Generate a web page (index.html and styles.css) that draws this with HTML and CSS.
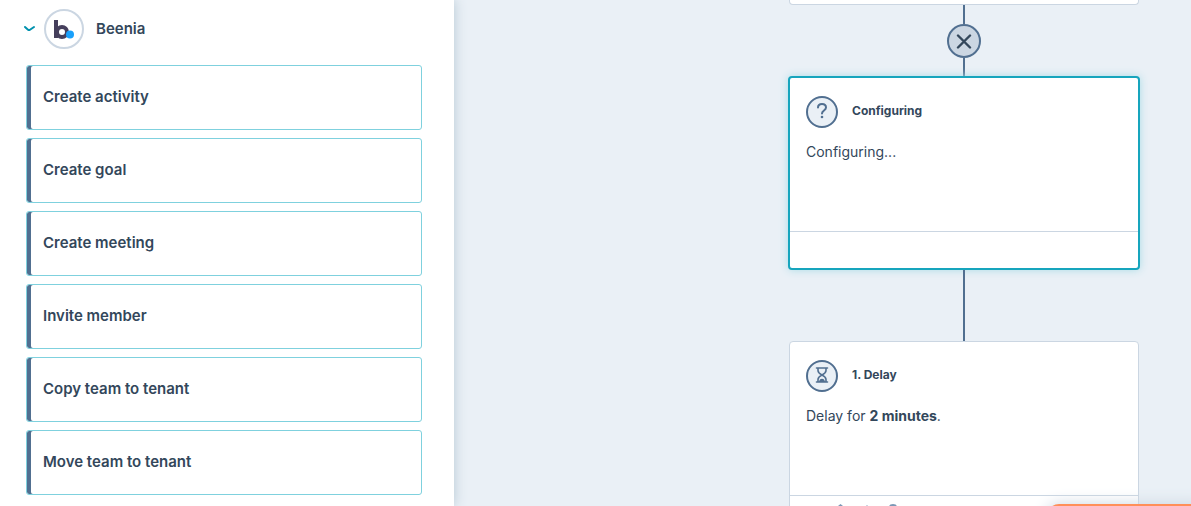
FILE: index.html
```html
<!DOCTYPE html>
<html lang="en">
<head>
  <meta charset="utf-8" />
  <meta name="viewport" content="width=device-width, initial-scale=1.0" />
  <title>Workflow editor</title>
  <link rel="stylesheet" href="styles.css">
</head>
<body>

  <aside class="sidebar">
    <button class="group-header" type="button" aria-expanded="true">
      <svg class="chevron" viewBox="0 0 14 10" aria-hidden="true">
        <path d="M3 3L6 5.700Q7 6.400 8 5.700L12 3" />
      </svg>
      <span class="app-logo">
        <svg viewBox="0 0 22 22" aria-hidden="true">
          <path class="logo-b" d="M3 2V20" />
          <circle class="logo-b" cx="9" cy="14" r="5" />
          <circle class="logo-dot" cx="17" cy="16.500" r="4" />
        </svg>
      </span>
      <span class="group-name">Beenia</span>
    </button>

    <div class="action-list">
      <button class="action" type="button">Create activity</button>
      <button class="action" type="button">Create goal</button>
      <button class="action" type="button">Create meeting</button>
      <button class="action" type="button">Invite member</button>
      <button class="action" type="button">Copy team to tenant</button>
      <button class="action" type="button">Move team to tenant</button>
    </div>
  </aside>

  <main class="canvas">
    <div class="flow">
      <div class="card card-end"></div>
      <div class="line line-short"></div>
      <button class="cancel" type="button" aria-label="Cancel">
        <svg viewBox="0 0 16 16" aria-hidden="true">
          <path d="M2 2.500L14 14.500M14 2.500L2 14.500" />
        </svg>
      </button>
      <div class="line line-short"></div>

      <section class="card selected">
        <div class="card-body">
          <div class="card-header">
            <span class="step-icon">
              <svg viewBox="0 0 20 20" aria-hidden="true">
                <path d="M6 5.500C6 0.800 14 0.800 14 5.500C14 8.500 10 8.500 10 11.500" />
                <circle class="dot" cx="10" cy="15" r="1.300" />
              </svg>
            </span>
            <h2>Configuring</h2>
          </div>
          <p>Configuring...</p>
        </div>
        <div class="card-footer"></div>
      </section>

      <div class="line line-long"></div>

      <section class="card">
        <div class="card-body">
          <div class="card-header">
            <span class="step-icon">
              <svg class="hourglass" viewBox="0 0 20 20" aria-hidden="true">
                <path d="M4.500 2H15.500M4.500 16H15.500M6 2V4.500C6 6.500 8 8 10 9C12 8 14 6.500 14 4.500V2M6 16V13.500C6 11.500 8 10 10 9C12 10 14 11.500 14 13.500V16" />
                <path class="dot" d="M7 16C7 11.500 13 11.500 13 16Z" />
              </svg>
            </span>
            <h2>1. Delay</h2>
          </div>
          <p>Delay for <b>2 minutes</b>.</p>
        </div>
        <div class="card-footer card-tools">
          <button type="button" aria-label="Step options">
            <svg viewBox="0 0 60 12" aria-hidden="true">
              <path d="M1 2L3.500 0L6 2V8H1Z" />
              <path class="faint" d="M29 1H31V9H29Z" />
              <path class="ring" d="M53 9V3Q53 1 56 1Q59 1 59 3V9" />
            </svg>
          </button>
        </div>
      </section>
    </div>
  </main>

  <button class="help" type="button" aria-label="Help"></button>

</body>
</html>
```
FILE: styles.css
```css
* {
  box-sizing: border-box;
}

body {
  display: flex;
  height: 100vh;
  margin: 0;
  overflow: hidden;
  position: relative;
  background: #eaf0f6;
  color: #33475b;
  font-family: Inter, "Open Sans", sans-serif;
  font-size: 14px;
}

button {
  font: inherit;
  color: inherit;
  cursor: pointer;
}

svg {
  display: block;
  fill: none;
  stroke-linecap: round;
}

/* action picker */
.sidebar {
  flex: 0 0 38%;
  min-width: 454px;
  padding: 9px 32px 0 26px;
  background: #fff;
  box-shadow: 0 0 12px #b5c7d3;
  z-index: 1;
}

.group-header {
  display: flex;
  align-items: center;
  margin-left: -4px;
  padding: 0;
  border: none;
  background: none;
  font-size: 15px;
  font-weight: 600;
}

.group-name {
  padding-bottom: 2px;
}

.chevron {
  width: 14px;
  height: 10px;
  stroke: #0091ae;
  stroke-width: 2;
}

.app-logo {
  display: flex;
  align-items: center;
  justify-content: center;
  width: 40px;
  height: 40px;
  margin: 0 12px 0 8px;
  border: 2px solid #cbd6e2;
  border-radius: 50%;
}

.app-logo svg {
  width: 22px;
  height: 22px;
  stroke-linecap: butt;
}

.logo-b {
  stroke: #453f5c;
  stroke-width: 4;
}

.logo-dot {
  fill: #18a0fb;
}

.action-list {
  display: flex;
  flex-direction: column;
  gap: 8px;
  margin-top: 16px;
}

.action {
  height: 65px;
  padding: 0 16px 2px;
  border: 1px solid #7fd1de;
  border-radius: 3px;
  background: #fff;
  box-shadow: inset 4px 0 #516f90;
  font-size: 15px;
  font-weight: 600;
  text-align: left;
}

/* workflow */
.canvas {
  flex: 1;
  height: 100%;
  padding-right: 51px;
  overflow: hidden;
}

.flow {
  display: flex;
  flex-direction: column;
  align-items: center;
  width: 352px;
  margin-left: auto;
}

.card {
  flex: none;
  width: 350px;
  border: 1px solid #cbd6e2;
  border-radius: 4px;
  background: #fff;
}

.card-end {
  height: 5px;
  border-top: none;
  border-radius: 0 0 4px 4px;
}

.selected {
  width: 352px;
  border: 2px solid #16a5bd;
  box-shadow: 0 0 8px #a9dce6;
}

.line {
  flex: none;
  width: 2px;
  background: #516f90;
}

.line-short {
  height: 19px;
}

.line-short + .selected {
  margin-top: -1px;
}

.line-long {
  height: 71px;
}

.cancel {
  display: flex;
  align-items: center;
  justify-content: center;
  width: 34px;
  height: 34px;
  padding: 0;
  border: 2px solid #516f90;
  border-radius: 50%;
  background: #cbd6e2;
}

.cancel svg {
  width: 16px;
  height: 16px;
  stroke: #33475b;
  stroke-width: 2.400;
}

.card-body {
  height: 153px;
  padding: 18px 16px;
}

.card-header {
  display: flex;
  align-items: center;
  gap: 14px;
}

.card h2 {
  margin: 0 0 4px;
  font-size: 12px;
  font-weight: 700;
}

.card p {
  margin: 12px 0 0;
  line-height: 24px;
}

.step-icon {
  display: flex;
  align-items: center;
  justify-content: center;
  width: 32px;
  height: 32px;
  border: 2px solid #516f90;
  border-radius: 50%;
  background: #eaf0f6;
}

.step-icon svg {
  width: 20px;
  height: 20px;
  stroke: #516f90;
  stroke-width: 2;
}

.step-icon .hourglass {
  stroke-width: 1.600;
}

.step-icon .dot {
  fill: #516f90;
  stroke: none;
}

.card-footer {
  height: 37px;
  border-top: 1px solid #cbd6e2;
}

.card-tools {
  padding: 8px 47px;
}

.card-tools button {
  display: block;
  padding: 0;
  border: none;
  background: none;
}

.card-tools svg {
  width: 60px;
  height: 12px;
  fill: #7c98b6;
}

.card-tools .faint {
  fill: #cbd6e2;
}

.card-tools .ring {
  fill: none;
  stroke: #7c98b6;
  stroke-width: 2;
}

/* floating button that peeks over the bottom edge */
.help {
  position: absolute;
  right: -20px;
  bottom: -38px;
  width: 164px;
  height: 40px;
  border: none;
  border-radius: 12px;
  background: #ff8f59;
  box-shadow: 0 0 16px #cbd6e2;
  z-index: 2;
}
```
